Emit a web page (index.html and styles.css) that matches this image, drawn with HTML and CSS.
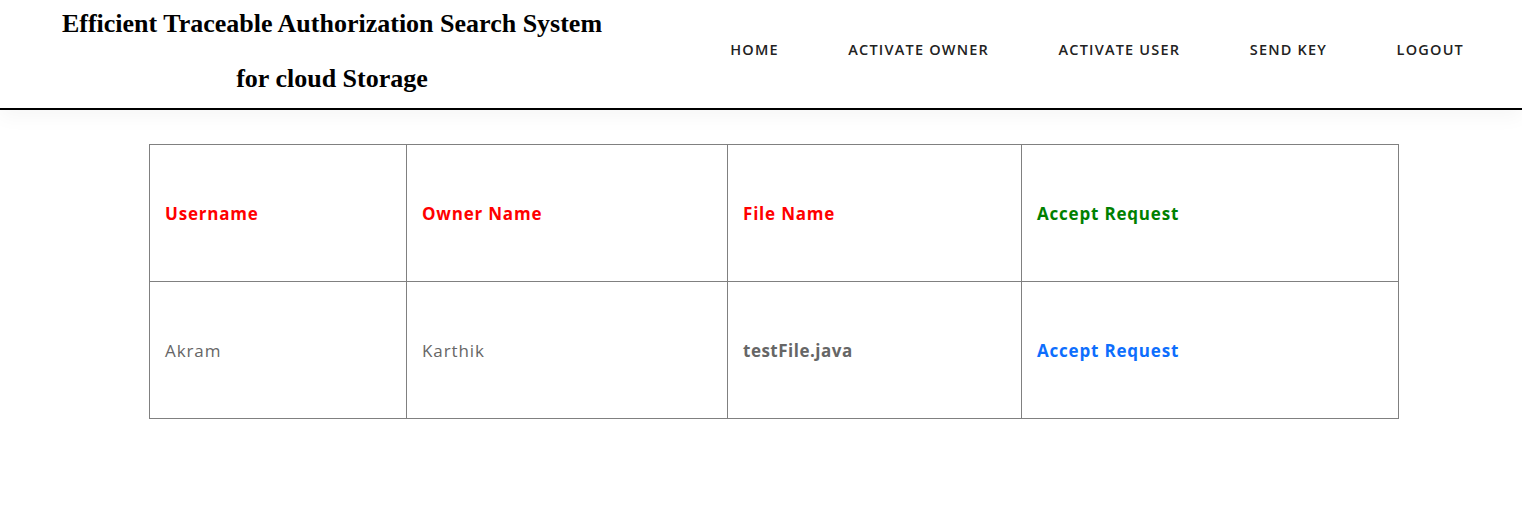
FILE: index.html
```html
<!DOCTYPE html>
<html lang="en">
<head>
<meta charset="utf-8">
<title>Efficient Traceable Authorization Search System</title>
<link rel="stylesheet" href="styles.css">
</head>
<body>
<header class="site-header">
  <div class="brand">
    <h2 class="brand-title">Efficient Traceable Authorization Search System<br>for cloud Storage</h2>
  </div>
  <nav class="main-nav">
    <ul class="nav-list">
      <li><a class="nav-link" href="#">HOME</a></li>
      <li><a class="nav-link" href="#">ACTIVATE OWNER</a></li>
      <li><a class="nav-link" href="#">ACTIVATE USER</a></li>
      <li><a class="nav-link" href="#">SEND KEY</a></li>
      <li><a class="nav-link" href="#">LOGOUT</a></li>
    </ul>
  </nav>
</header>
<main class="content">
  <table class="req-table">
    <colgroup>
      <col class="c1"><col class="c2"><col class="c3"><col class="c4">
    </colgroup>
    <thead>
      <tr>
        <th class="th-red">Username</th>
        <th class="th-red">Owner Name</th>
        <th class="th-red">File Name</th>
        <th class="th-green">Accept Request</th>
      </tr>
    </thead>
    <tbody>
      <tr>
        <td>Akram</td>
        <td>Karthik</td>
        <td class="td-bold">testFile.java</td>
        <td><a class="accept-link" href="#">Accept Request</a></td>
      </tr>
    </tbody>
  </table>
</main>
</body>
</html>
```
FILE: styles.css
```css
* { box-sizing: border-box; }
html, body { margin: 0; padding: 0; background: #fff; }
body { font-family: "Open Sans", "Liberation Sans", sans-serif; }

.site-header {
  height: 110px;
  display: flex;
  justify-content: space-between;
  align-items: flex-start;
  border-bottom: 2px solid #000;
  box-shadow: 0 8px 18px rgba(0,0,0,0.035);
  position: relative;
}
.brand { width: 664px; text-align: center; }
.brand-title {
  margin: -4px 0 0;
  font-family: "Liberation Serif", "Times New Roman", serif;
  font-weight: bold;
  font-size: 26px;
  line-height: 55px;
  color: #000;
}
.main-nav { margin-top: 40px; padding-right: 58px; }
.nav-list { list-style: none; margin: 0; padding: 0; display: flex; gap: 69.5px; }
.nav-link {
  display: block;
  font-size: 14.5px;
  font-weight: 600;
  line-height: 20px;
  color: #222;
  text-decoration: none;
  letter-spacing: 1.2px;
}

.content { padding: 34px 0 0 149px; }
.req-table { border-collapse: collapse; width: 1249px; table-layout: fixed; }
.c1 { width: 257px; } .c2 { width: 321px; } .c3 { width: 294px; } .c4 { width: 377px; }
.req-table th, .req-table td {
  border: 1px solid #808080;
  height: 137px;
  padding: 0 15px;
  text-align: left;
  vertical-align: middle;
  font-size: 17px;
}
.req-table th { font-weight: 700; letter-spacing: 0.8px; }
.th-red { color: #ff0000; }
.th-green { color: #008000; }
.req-table td { color: #666; font-weight: 400; letter-spacing: 0.9px; }
.req-table td.td-bold { font-weight: 700; letter-spacing: 0.5px; }
.accept-link { color: #0d6efd; font-weight: 700; text-decoration: none; letter-spacing: 0.8px; }
```
